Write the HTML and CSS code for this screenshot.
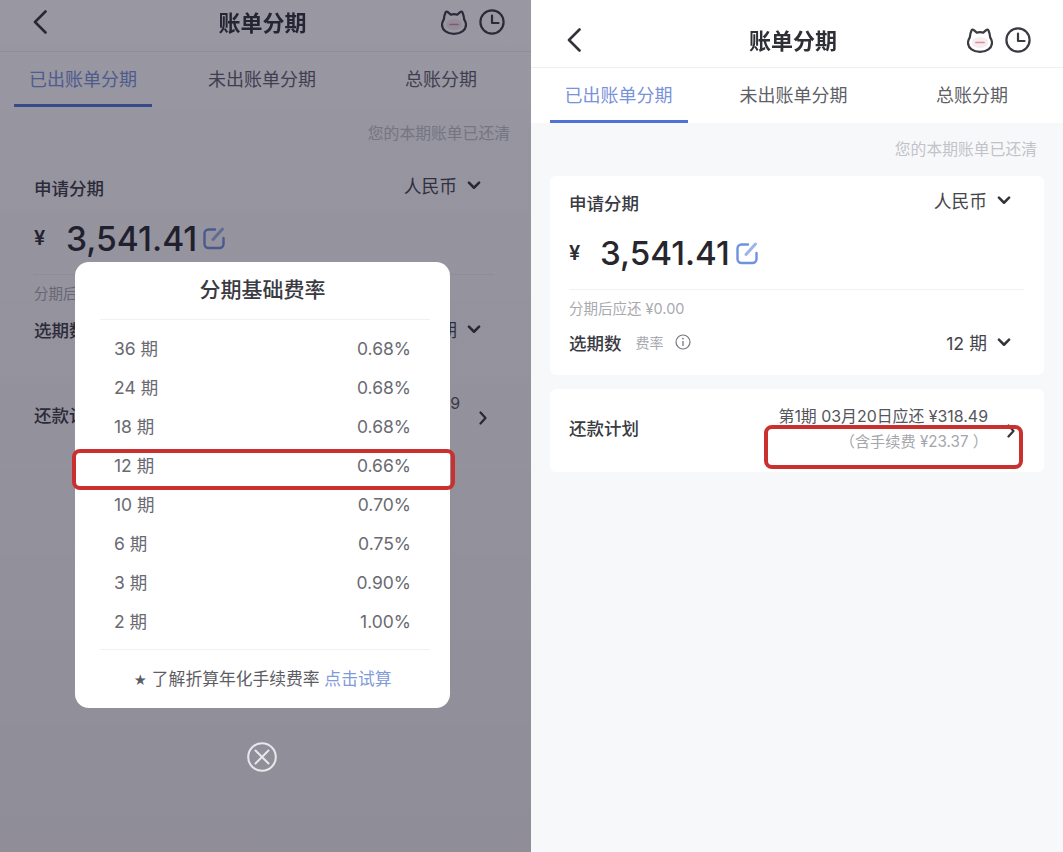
FILE: index.html
```html
<!DOCTYPE html>
<html lang="zh-CN">
<head>
  <meta charset="UTF-8">
  <meta name="viewport" content="width=device-width, initial-scale=1.0">
  <title>账单分期</title>
  <link rel="stylesheet" href="styles.css">
</head>
<body>
  <svg class="defs" width="0" height="0" aria-hidden="true">
    <symbol id="icon-cat" viewBox="0 0 26 26">
      <path d="M4.6 3.2C5 2.4 5.8 2.3 6.5 2.8L9.8 5.6C11.8 5.1 14.2 5.1 16.2 5.6L19.5 2.8C20.2 2.3 21 2.4 21.4 3.2C22.4 5.4 23 7.8 23.2 10.4C24.4 12.4 25 14 25 15.8C25 21.2 19.5 24.8 13 24.8C6.5 24.8 1 21.2 1 15.8C1 14 1.6 12.4 2.8 10.4C3 7.8 3.6 5.4 4.6 3.2Z" fill="none" stroke="currentColor" stroke-width="2.2" stroke-linejoin="round"/>
      <ellipse cx="13" cy="15.5" rx="8" ry="5.5" fill="#f6ecef"/>
      <path d="M9 15.5H17" stroke="#d98f9c" stroke-width="1.7" stroke-linecap="round"/>
    </symbol>
    <symbol id="icon-clock" viewBox="0 0 26 26">
      <circle cx="13" cy="13" r="11.6" fill="none" stroke="currentColor" stroke-width="2.2"/>
      <path d="M13 6.5V14H19.5" fill="none" stroke="currentColor" stroke-width="2.2" stroke-linecap="round" stroke-linejoin="round"/>
    </symbol>
    <symbol id="icon-back" viewBox="0 0 14 24">
      <path d="M12.5 1.5L2 12L12.5 22.5" fill="none" stroke="currentColor" stroke-width="2.6" stroke-linecap="round" stroke-linejoin="round"/>
    </symbol>
    <symbol id="icon-down" viewBox="0 0 12 8">
      <path d="M1.5 1.5L6 6L10.5 1.5" fill="none" stroke="currentColor" stroke-width="2.2" stroke-linecap="round" stroke-linejoin="round"/>
    </symbol>
    <symbol id="icon-right" viewBox="0 0 8 14">
      <path d="M1.5 1.5L6.5 7L1.5 12.5" fill="none" stroke="currentColor" stroke-width="2.2" stroke-linecap="round" stroke-linejoin="round"/>
    </symbol>
    <symbol id="icon-edit" viewBox="0 0 24 24">
      <path d="M13 3.5H6.5C4.3 3.5 2.5 5.3 2.5 7.5V18C2.5 20.2 4.3 22 6.5 22H17.5C19.7 22 21.5 20.2 21.5 18V12" fill="none" stroke="currentColor" stroke-width="2.4" stroke-linecap="round"/>
      <path d="M11 13.5L20.5 3" fill="none" stroke="#9db4ea" stroke-width="3" stroke-linecap="round"/>
    </symbol>
    <symbol id="icon-info" viewBox="0 0 16 16">
      <circle cx="8" cy="8" r="7" fill="none" stroke="currentColor" stroke-width="1.2"/>
      <path d="M8 7V12" stroke="currentColor" stroke-width="1.3"/>
      <circle cx="8" cy="4.6" r="0.9" fill="currentColor"/>
    </symbol>
    <symbol id="icon-close" viewBox="0 0 30 30">
      <circle cx="15" cy="15" r="13.8" fill="none" stroke="currentColor" stroke-width="2"/>
      <path d="M8.5 8.5L21.5 21.5M21.5 8.5L8.5 21.5" stroke="currentColor" stroke-width="2" stroke-linecap="round"/>
    </symbol>
  </svg>

  <div class="shots">
    <!-- left shot: same page with the rate popup open -->
    <section class="phone phone-dim">
      <header class="nav">
        <svg class="nav-back"><use href="#icon-back"/></svg>
        <h1 class="nav-title">账单分期</h1>
        <div class="nav-icons">
          <svg class="nav-icon"><use href="#icon-cat"/></svg>
          <svg class="nav-icon"><use href="#icon-clock"/></svg>
        </div>
      </header>
      <nav class="tabs">
        <a class="tab active">已出账单分期</a>
        <a class="tab">未出账单分期</a>
        <a class="tab">总账分期</a>
      </nav>
      <main class="body">
        <p class="note">您的本期账单已还清</p>
        <div class="card">
          <div class="row-head">
            <span class="label">申请分期</span>
            <span class="select">人民币<svg class="down"><use href="#icon-down"/></svg></span>
          </div>
          <div class="amount">
            <span class="yen">¥</span>
            <span class="value">3,541.41</span>
            <svg class="edit"><use href="#icon-edit"/></svg>
          </div>
          <p class="after">分期后应还 ¥0.00</p>
          <div class="row-term">
            <span class="label">选期数</span>
            <span class="rate">费率</span>
            <svg class="info"><use href="#icon-info"/></svg>
            <span class="select term">12 期<svg class="down"><use href="#icon-down"/></svg></span>
          </div>
        </div>
        <div class="card plan">
          <span class="label">还款计划</span>
          <div class="plan-text">
            <span class="plan-due">第1期 03月20日应还 ¥318.49</span>
            <span class="plan-fee">（含手续费 ¥23.37 ）</span>
          </div>
          <svg class="right"><use href="#icon-right"/></svg>
        </div>
      </main>
      <div class="overlay"></div>
      <div class="modal">
        <h2 class="modal-title">分期基础费率</h2>
        <ul class="rates">
          <li class="rate-row"><span>36 期</span><span>0.68%</span></li>
          <li class="rate-row"><span>24 期</span><span>0.68%</span></li>
          <li class="rate-row"><span>18 期</span><span>0.68%</span></li>
          <li class="rate-row"><span>12 期</span><span>0.66%</span></li>
          <li class="rate-row"><span>10 期</span><span>0.70%</span></li>
          <li class="rate-row"><span>6 期</span><span>0.75%</span></li>
          <li class="rate-row"><span>3 期</span><span>0.90%</span></li>
          <li class="rate-row"><span>2 期</span><span>1.00%</span></li>
        </ul>
        <p class="modal-foot"><span class="star">★</span> 了解折算年化手续费率 <a class="link">点击试算</a></p>
      </div>
      <svg class="modal-close"><use href="#icon-close"/></svg>
      <div class="mark mark-rate"></div>
    </section>

    <!-- right shot -->
    <section class="phone phone-lit">
      <header class="nav">
        <svg class="nav-back"><use href="#icon-back"/></svg>
        <h1 class="nav-title">账单分期</h1>
        <div class="nav-icons">
          <svg class="nav-icon"><use href="#icon-cat"/></svg>
          <svg class="nav-icon"><use href="#icon-clock"/></svg>
        </div>
      </header>
      <nav class="tabs">
        <a class="tab active">已出账单分期</a>
        <a class="tab">未出账单分期</a>
        <a class="tab">总账分期</a>
      </nav>
      <main class="body">
        <p class="note">您的本期账单已还清</p>
        <div class="card">
          <div class="row-head">
            <span class="label">申请分期</span>
            <span class="select">人民币<svg class="down"><use href="#icon-down"/></svg></span>
          </div>
          <div class="amount">
            <span class="yen">¥</span>
            <span class="value">3,541.41</span>
            <svg class="edit"><use href="#icon-edit"/></svg>
          </div>
          <p class="after">分期后应还 ¥0.00</p>
          <div class="row-term">
            <span class="label">选期数</span>
            <span class="rate">费率</span>
            <svg class="info"><use href="#icon-info"/></svg>
            <span class="select term">12 期<svg class="down"><use href="#icon-down"/></svg></span>
          </div>
        </div>
        <div class="card plan">
          <span class="label">还款计划</span>
          <div class="plan-text">
            <span class="plan-due">第1期 03月20日应还 ¥318.49</span>
            <span class="plan-fee">（含手续费 ¥23.37 ）</span>
          </div>
          <svg class="right"><use href="#icon-right"/></svg>
        </div>
      </main>
      <div class="mark mark-fee"></div>
    </section>
  </div>
</body>
</html>
```

FILE: styles.css
```css
* {
  box-sizing: border-box;
}

html, body {
  height: 100%;
}

body {
  margin: 0;
  background: #fff;
  color: #26262c;
  font-family: Inter, "Noto Sans CJK SC", sans-serif;
  overflow: hidden;
}

h1, h2, p, ul {
  margin: 0;
  padding: 0;
}

.defs {
  position: absolute;
}

.shots {
  display: flex;
  height: 852px;
}

.phone {
  position: relative;
  display: flex;
  flex-direction: column;
  height: 852px;
  flex: none;
  filter: blur(0.55px);
  overflow: hidden;
}

.phone-dim {
  --nav-h: 52px;
  --nav-pad: 0 26px 8px 33px;
  --title-top: 5px;
  --title-shift: 6px;
  --card-x: 15px;
  --card-top: 17px;
  --card-gap: 16px;
  --card-bg: #fdfdfd;
  --body-bg: #fdfdfd;
  --card-pad: 19px;
  --card-pad-r: 33px;
  --note-r: 21px;
  --tab-cols: 166px 192px 166px;
  --value-size: 33.6px;
  --yen-w: 32px;
  --term-top: 8px;
  width: 531px;
}

.phone-lit {
  --nav-h: 68px;
  --nav-pad: 12px 32px 0 36px;
  --title-top: 23px;
  --title-shift: 8px;
  --card-x: 19px;
  --card-top: 16px;
  --card-gap: 14px;
  --card-bg: #fff;
  --body-bg: #f7f8fa;
  --card-pad: 19px;
  --card-pad-r: 31px;
  --note-r: 26px;
  --tab-cols: 175px 175px 182px;
  --value-size: 33.2px;
  --yen-w: 31px;
  --term-top: 6px;
  width: 532px;
}

.nav {
  position: relative;
  display: flex;
  flex: none;
  align-items: center;
  justify-content: space-between;
  height: var(--nav-h);
  padding: var(--nav-pad);
  border-bottom: 1px solid #eeeff2;
}

.nav-back {
  width: 14px;
  height: 24px;
  color: #33333a;
}

.nav-title {
  position: absolute;
  left: 0;
  right: var(--title-shift);
  top: var(--title-top);
  text-align: center;
  font-size: 22px;
  font-weight: 700;
  color: #2f2f36;
}

.nav-icons {
  display: flex;
  gap: 12px;
}

.nav-icon {
  width: 26px;
  height: 26px;
  color: #3a3a40;
}

.tabs {
  display: grid;
  flex: none;
  grid-template-columns: var(--tab-cols);
  grid-template-rows: 55px;
  background: #fff;
}

.tab {
  justify-self: center;
  width: 138px;
  height: 55px;
  line-height: 55px;
  text-align: center;
  font-size: 18px;
  white-space: nowrap;
  color: #5f5f68;
  border-bottom: 3px solid transparent;
}

.tab.active {
  color: #7a93d8;
  border-bottom-color: #4f74d6;
}

.body {
  flex: 1;
  padding: 16px var(--card-x) 0;
  background: var(--body-bg);
}

.note {
  padding-right: calc(var(--note-r) - var(--card-x));
  padding-top: 1px;
  line-height: 20px;
  text-align: right;
  font-size: 15.8px;
  color: #c2c3c8;
}

.card {
  margin-top: var(--card-top);
  height: 199px;
  padding: 0 var(--card-pad-r) 0 var(--card-pad);
  background: var(--card-bg);
  border-radius: 6px;
}

.row-head {
  display: flex;
  align-items: center;
  justify-content: space-between;
  height: 53px;
  margin-bottom: 1px;
}

.label {
  font-size: 17.5px;
  font-weight: 500;
  color: #3a3a42;
}

.select {
  display: flex;
  align-items: center;
  gap: 10px;
  margin: -5px 2px 0 0;
  font-size: 17.8px;
  color: #45454c;
}

.down {
  width: 14px;
  height: 9px;
  color: #33333a;
}

.amount {
  display: flex;
  align-items: center;
  height: 46px;
}

.yen {
  width: var(--yen-w);
  font-size: 20px;
  font-weight: 600;
  color: #2c2c33;
}

.value {
  font-size: var(--value-size);
  font-weight: 500;
  color: #26262c;
}

.edit {
  width: 24px;
  height: 24px;
  margin-left: 5px;
  color: #6e92e2;
}

.after {
  margin: 13px -11px 0 0;
  padding-top: 9px;
  border-top: 1px solid #f0f1f3;
  line-height: 20px;
  font-size: 14.5px;
  color: #a9aab0;
}

.row-term {
  display: flex;
  align-items: center;
  height: 34px;
  margin-top: var(--term-top);
}

.rate {
  margin-left: 14px;
  font-size: 14px;
  color: #a9aab0;
}

.info {
  width: 16px;
  height: 16px;
  margin-left: 11px;
  color: #77777e;
}

.term {
  margin: 0 2px 0 auto;
}

.plan {
  display: flex;
  align-items: center;
  height: 83px;
  margin-top: var(--card-gap);
  padding-right: 29px;
}

.plan .label {
  margin-top: -6px;
}

.plan-text {
  display: flex;
  flex-direction: column;
  align-items: flex-end;
  gap: 5px;
  margin: -2px 19px 0 auto;
  line-height: 20px;
}

.plan-due {
  font-size: 15.9px;
  color: #55555c;
}

.plan-fee {
  font-size: 15.2px;
  color: #a5a6ac;
}

.right {
  width: 8px;
  height: 14px;
  color: #33333a;
}

.overlay {
  position: absolute;
  inset: 0;
  background: linear-gradient(rgba(27, 25, 50, 0.45), rgba(30, 25, 45, 0.49));
}

.modal {
  position: absolute;
  left: 75px;
  top: 262px;
  width: 375px;
  height: 446px;
  padding: 0 20px 0 25px;
  background: #fff;
  border-radius: 14px;
}

.modal-title {
  height: 58px;
  padding-right: 5px;
  line-height: 56px;
  border-bottom: 1px solid #f0f1f3;
  text-align: center;
  font-size: 21px;
  font-weight: 500;
  color: #3a3a42;
}

.rates {
  list-style: none;
  padding: 9px 19px 8px 14px;
  border-bottom: 1px solid #f0f1f3;
}

.rate-row {
  display: flex;
  justify-content: space-between;
  height: 39px;
  line-height: 39px;
  font-size: 17.5px;
  color: #6a6a72;
}

.modal-foot {
  margin: 18px 5px 0 0;
  text-align: center;
  font-size: 16.8px;
  line-height: 22px;
  color: #5d5d65;
  white-space: nowrap;
}

.star {
  font-size: 13px;
}

.link {
  color: #7f9bd8;
}

.modal-close {
  position: absolute;
  left: 247px;
  top: 742px;
  width: 30px;
  height: 30px;
  color: #e8e8ec;
}

.mark {
  position: absolute;
  border: 4px solid #c9302e;
  border-radius: 8px;
}

.mark-rate {
  left: 72px;
  top: 449px;
  width: 383px;
  height: 41px;
}

.mark-fee {
  left: 233px;
  top: 425px;
  width: 259px;
  height: 44px;
}
```
